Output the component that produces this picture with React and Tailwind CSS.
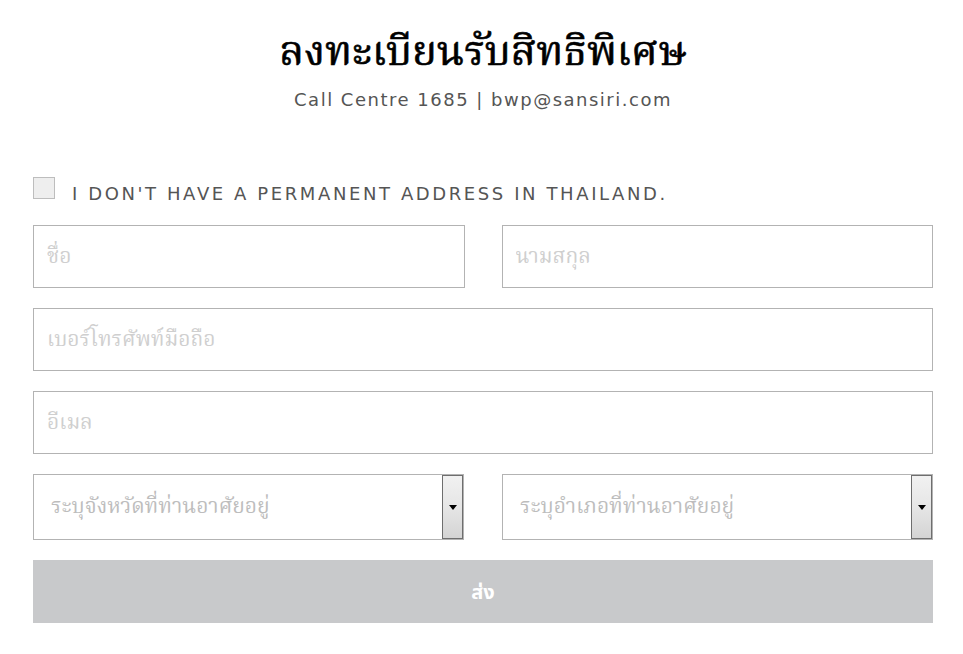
const thai = { fontFamily: '"Liberation Serif", "Noto Serif Thai", "Noto Sans Thai", serif' }
const wide = { fontFamily: '"DejaVu Sans", Verdana, sans-serif' }

function Field({ placeholder, className = '' }) {
  return (
    <input
      type="text"
      placeholder={placeholder}
      className={`h-[63px] w-full border border-[#b3b3b3] bg-white px-[13px] text-[21px] text-[#333] outline-none placeholder:text-[#cfcfcf] ${className}`}
      style={thai}
    />
  )
}

function SelectBox({ label }) {
  return (
    <div className="flex h-[66px] items-stretch border border-[#b3b3b3] bg-white">
      <div className="flex flex-1 items-center pl-[17px] text-[21px] text-[#bdbdbd]" style={thai}>
        {label}
      </div>
      <div className="flex w-[21px] flex-col items-center justify-center border border-[#6e6e6e] bg-gradient-to-b from-[#f1f1f1] via-[#e6e6e6] to-[#d4d4d4]">
        <svg width="8" height="5" viewBox="0 0 8 5">
          <path d="M0 0h8L4 5z" fill="#000" />
        </svg>
      </div>
    </div>
  )
}

export default function App() {
  return (
    <div className="min-h-[654px] bg-white pt-[26px]">
      <div className="ml-[33px] w-[900px]">
        <h1
          className="text-center text-[41.5px] leading-[50px] text-black [-webkit-text-stroke:0.6px_black]"
          style={thai}
        >
          ลงทะเบียนรับสิทธิพิเศษ
        </h1>
        <p
          className="mt-[10px] text-center text-[18px] tracking-[1.5px] text-[#555]"
          style={wide}
        >
          Call Centre 1685 | bwp@sansiri.com
        </p>

        <label className="mt-[64px] flex items-start gap-[17px]">
          <span className="block h-[22px] w-[22px] shrink-0 border border-[#bdbdbd] bg-[#eeeeee]" />
          <span
            className="mt-[6px] text-[18px] leading-[22px] tracking-[2.6px] text-[#555]"
            style={wide}
          >
            I DON'T HAVE A PERMANENT ADDRESS IN THAILAND.
          </span>
        </label>

        <div className="mt-[20px] flex flex-col gap-[20px]">
          <div className="grid grid-cols-2 gap-[37px]">
            <Field placeholder="ชื่อ" />
            <Field placeholder="นามสกุล" />
          </div>
          <Field placeholder="เบอร์โทรศัพท์มือถือ" />
          <Field placeholder="อีเมล" />
          <div className="grid grid-cols-2 gap-[38px]">
            <SelectBox label="ระบุจังหวัดที่ท่านอาศัยอยู่" />
            <SelectBox label="ระบุอำเภอที่ท่านอาศัยอยู่" />
          </div>
          <button
            className="h-[63px] w-full bg-[#c8c9cb] text-[20px] font-bold text-white"
            style={{ fontFamily: '"Liberation Sans", "Noto Sans Thai", sans-serif' }}
          >
            ส่ง
          </button>
        </div>
      </div>
    </div>
  )
}
